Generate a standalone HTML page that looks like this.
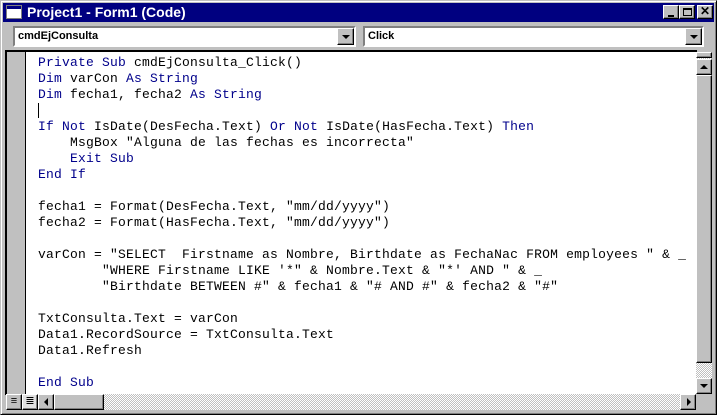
<!DOCTYPE html><html><head><style>
*{margin:0;padding:0;box-sizing:border-box}
body{width:717px;height:415px;background:#c0c0c0;position:relative;overflow:hidden;font-family:"Liberation Sans",sans-serif}
.abs{position:absolute}
.title{left:3px;top:3px;width:711px;height:19px;background:#000080;color:#fff;font-weight:bold;font-size:13px;line-height:19px}
.btn{background:#c0c0c0;border:1px solid;border-color:#fff #000 #000 #fff;box-shadow:inset -1px -1px #808080}
.combo{top:26px;height:21px;background:#fff;border:2px solid;border-color:#808080 #fff #fff #808080;font-weight:bold;font-size:11px;line-height:17px;padding-left:3px}
.code{left:5px;top:50px;width:692px;height:345px;background:#fff;border-top:2px solid #000;border-left:2px solid #000}
.gut{left:7px;top:52px;width:19px;height:343px;background:#c0c0c0;border-right:1px solid #000}
pre{position:absolute;left:38px;top:55px;font-family:"Liberation Mono",monospace;font-size:13px;line-height:16px;color:#000;letter-spacing:.2px}
.k{color:#00008b}
.hatch{background:repeating-conic-gradient(#c0c0c0 0 25%,#fff 0 50%) 0 0/2px 2px}
</style></head><body>
<div style="position:absolute;left:0;top:0;width:717px;height:415px;border:1px solid;border-color:#c0c0c0 #000 #000 #c0c0c0;box-shadow:inset 1px 1px #fff,inset -1px -1px #808080"></div>
<div class="abs title"><span style="position:absolute;left:3px;top:2px;width:16px;height:14px;background:#fff;border:1px solid #808080"><span style="position:absolute;left:0;top:0;width:14px;height:3px;background:#000080"></span></span><span style="position:absolute;left:24px;font-size:14px">Project1 - Form1 (Code)</span>
<div class="abs btn" style="left:660px;top:2px;width:16px;height:14px"><div class="abs" style="left:4px;top:9px;width:6px;height:2px;background:#000"></div></div>
<div class="abs btn" style="left:676px;top:2px;width:16px;height:14px"><div class="abs" style="left:3px;top:2px;width:9px;height:8px;border:1px solid #000;border-top-width:2px"></div></div>
<div class="abs btn" style="left:694px;top:2px;width:16px;height:14px;color:#000;font-size:12px;line-height:11px;text-align:center">✕</div>
</div>
<div class="abs combo" style="left:13px;width:343px">cmdEjConsulta<div class="abs btn" style="right:0;top:0;width:17px;height:17px"><div class="abs" style="left:4px;top:6px;border:4px solid transparent;border-top:4px solid #000;border-bottom:0"></div></div></div>
<div class="abs combo" style="left:363px;width:341px">Click<div class="abs btn" style="right:0;top:0;width:17px;height:17px"><div class="abs" style="left:4px;top:6px;border:4px solid transparent;border-top:4px solid #000;border-bottom:0"></div></div></div>
<div class="abs code"></div>
<div class="abs gut"></div>
<pre><span class="k">Private Sub</span> cmdEjConsulta_Click()
<span class="k">Dim</span> varCon <span class="k">As String</span>
<span class="k">Dim</span> fecha1, fecha2 <span class="k">As String</span>
<span style="border-left:1px solid #000"></span>
<span class="k">If Not</span> IsDate(DesFecha.Text) <span class="k">Or Not</span> IsDate(HasFecha.Text) <span class="k">Then</span>
    MsgBox "Alguna de las fechas es incorrecta"
    <span class="k">Exit Sub</span>
<span class="k">End If</span>

fecha1 = Format(DesFecha.Text, "mm/dd/yyyy")
fecha2 = Format(HasFecha.Text, "mm/dd/yyyy")

varCon = "SELECT  Firstname as Nombre, Birthdate as FechaNac FROM employees " &amp; _
        "WHERE Firstname LIKE '*" &amp; Nombre.Text &amp; "*' AND " &amp; _
        "Birthdate BETWEEN #" &amp; fecha1 &amp; "# AND #" &amp; fecha2 &amp; "#"

TxtConsulta.Text = varCon
Data1.RecordSource = TxtConsulta.Text
Data1.Refresh

<span class="k">End Sub</span></pre>
<div class="abs hatch" style="left:696px;top:52px;width:16px;height:342px"></div>
<div class="abs btn" style="left:696px;top:52px;width:16px;height:6px"></div>
<div class="abs btn" style="left:696px;top:59px;width:16px;height:16px"><div class="abs" style="left:3px;top:5px;border:4px solid transparent;border-bottom:4px solid #000;border-top:0"></div></div>
<div class="abs btn" style="left:696px;top:75px;width:16px;height:288px"></div>
<div class="abs btn" style="left:696px;top:378px;width:16px;height:16px"><div class="abs" style="left:3px;top:5px;border:4px solid transparent;border-top:4px solid #000;border-bottom:0"></div></div>
<div class="abs hatch" style="left:6px;top:394px;width:690px;height:16px"></div>
<div class="abs btn" style="left:6px;top:394px;width:16px;height:16px;font-size:11px;line-height:12px;text-align:center">≡</div>
<div class="abs btn" style="left:22px;top:394px;width:16px;height:16px;font-size:11px;line-height:12px;text-align:center;background:#e0e0e0">≣</div>
<div class="abs btn" style="left:38px;top:394px;width:16px;height:16px"><div class="abs" style="left:5px;top:3px;border:4px solid transparent;border-right:4px solid #000;border-left:0"></div></div>
<div class="abs btn" style="left:54px;top:394px;width:50px;height:16px"></div>
<div class="abs btn" style="left:680px;top:394px;width:16px;height:16px"><div class="abs" style="left:6px;top:3px;border:4px solid transparent;border-left:4px solid #000;border-right:0"></div></div>
<div class="abs" style="left:696px;top:394px;width:16px;height:16px;background:#c0c0c0"></div>
</body></html>
